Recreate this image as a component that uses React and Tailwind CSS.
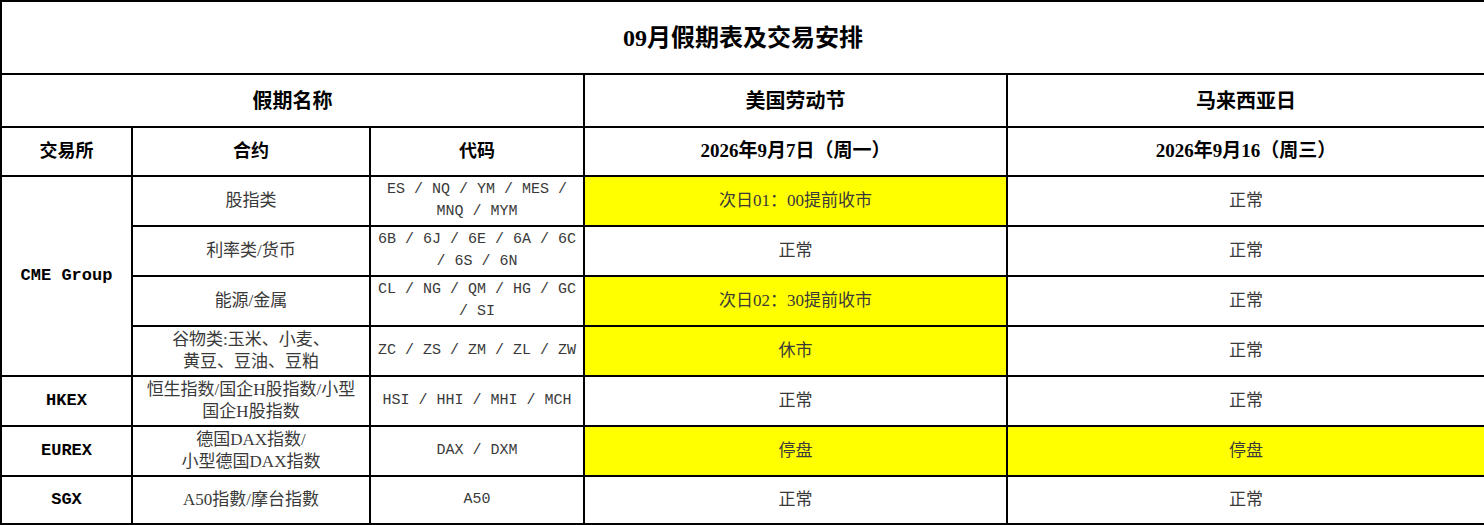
import React from "react";

const serif = { fontFamily: '"Liberation Serif", "Noto Sans CJK SC", serif' };

const rows = [
  { name: "股指类", code: ["ES / NQ / YM / MES /", "MNQ / MYM"], us: "次日01：00提前收市", usHi: true, my: "正常" },
  { name: "利率类/货币", code: ["6B / 6J / 6E / 6A / 6C", "/ 6S / 6N"], us: "正常", my: "正常" },
  { name: "能源/金属", code: ["CL / NG / QM / HG / GC", "/ SI"], us: "次日02：30提前收市", usHi: true, my: "正常" },
  { name: ["谷物类:玉米、小麦、", "黄豆、豆油、豆粕"], code: ["ZC / ZS / ZM / ZL / ZW"], us: "休市", usHi: true, my: "正常" },
];

const others = [
  { ex: "HKEX", name: ["恒生指数/国企H股指数/小型", "国企H股指数"], code: ["HSI / HHI / MHI / MCH"], us: "正常", my: "正常" },
  { ex: "EUREX", name: ["德国DAX指数/", "小型德国DAX指数"], code: ["DAX / DXM"], us: "停盘", usHi: true, my: "停盘", myHi: true },
  { ex: "SGX", name: ["A50指數/摩台指數"], code: ["A50"], us: "正常", my: "正常" },
];

const td = "border-2 border-black text-center align-middle p-0";

const Lines = ({ v, className }) => (
  <div className={className}>
    {(Array.isArray(v) ? v : [v]).map((l, i) => (
      <div key={i}>{l}</div>
    ))}
  </div>
);

const NameCell = ({ v }) => (
  <td className={`${td} text-[17px] leading-[22px] text-[#3a3a3a]`}>
    <Lines v={v} />
  </td>
);

const CodeCell = ({ v }) => (
  <td className={`${td} font-['Liberation_Mono',monospace] text-[15px] leading-[22px] text-[#3a3a3a]`}>
    <Lines v={v} />
  </td>
);

const StatusCell = ({ v, hi }) => (
  <td className={`${td} text-[17px] text-[#3a3a3a] ${hi ? "bg-[#ffff00]" : "bg-white"}`}>{v}</td>
);

export default function App() {
  return (
    <div className="w-[1484px] h-[525px] bg-white overflow-hidden" style={serif}>
      <table className="w-[1484px] border-collapse table-fixed">
        <colgroup>
          <col className="w-[131px]" />
          <col className="w-[238px]" />
          <col className="w-[214px]" />
          <col className="w-[423px]" />
          <col className="w-[478px]" />
        </colgroup>
        <tbody>
          <tr className="h-[73px]">
            <td colSpan={5} className={`${td} text-[24px] font-bold text-black`}>09月假期表及交易安排</td>
          </tr>
          <tr className="h-[53px]">
            <td colSpan={3} className={`${td} text-[20px] font-bold text-black`}>假期名称</td>
            <td className={`${td} text-[20px] font-bold text-black`}>美国劳动节</td>
            <td className={`${td} text-[20px] font-bold text-black`}>马来西亚日</td>
          </tr>
          <tr className="h-[49px]">
            <td className={`${td} text-[18px] font-bold text-black`}>交易所</td>
            <td className={`${td} text-[18px] font-bold text-black`}>合约</td>
            <td className={`${td} text-[18px] font-bold text-black`}>代码</td>
            <td className={`${td} text-[19px] font-bold text-black`}>2026年9月7日（周一）</td>
            <td className={`${td} text-[19px] font-bold text-black`}>2026年9月16（周三）</td>
          </tr>
          {rows.map((r, i) => (
            <tr key={i} className="h-[50px]">
              {i === 0 && (
                <td rowSpan={4} className={`${td} font-['Liberation_Mono',monospace] text-[17px] font-bold text-black`}>
                  CME Group
                </td>
              )}
              <NameCell v={r.name} />
              <CodeCell v={r.code} />
              <StatusCell v={r.us} hi={r.usHi} />
              <StatusCell v={r.my} hi={r.myHi} />
            </tr>
          ))}
          {others.map((r, i) => (
            <tr key={i} className={i === 2 ? "h-[48px]" : "h-[50px]"}>
              <td className={`${td} font-['Liberation_Mono',monospace] text-[17px] font-bold text-black`}>{r.ex}</td>
              <NameCell v={r.name} />
              <CodeCell v={r.code} />
              <StatusCell v={r.us} hi={r.usHi} />
              <StatusCell v={r.my} hi={r.myHi} />
            </tr>
          ))}
        </tbody>
      </table>
    </div>
  );
}
